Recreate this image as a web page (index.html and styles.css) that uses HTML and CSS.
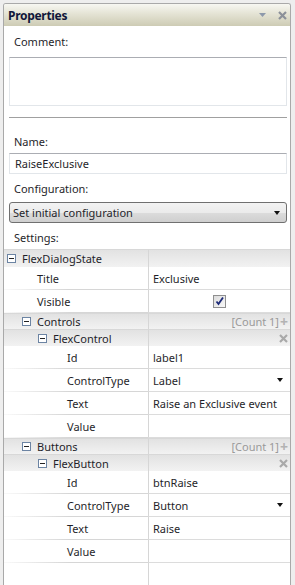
FILE: index.html
```html
<!DOCTYPE html>
<html lang="en">
<head>
  <meta charset="UTF-8">
  <meta name="viewport" content="width=device-width, initial-scale=1.0">
  <title>Properties</title>
  <link rel="stylesheet" href="styles.css">
</head>
<body>
  <div class="panel">
    <div class="titlebar">
      <span class="title">Properties</span>
      <span class="tb-icons">
        <svg width="7" height="4" viewBox="0 0 7 4"><path d="M0 0h7L3.5 4z" fill="#8d99ab"/></svg>
        <svg width="9" height="9" viewBox="0 0 9 9"><path d="M1 1l7 7M8 1L1 8" stroke="#8b9099" stroke-width="2.2"/></svg>
      </span>
    </div>

    <div class="fields">
      <div class="lbl">Comment:</div>
      <div class="memo"></div>
      <div class="sep"></div>
      <div class="lbl">Name:</div>
      <div class="textbox">RaiseExclusive</div>
      <div class="lbl">Configuration:</div>
      <div class="combo">
        <span>Set initial configuration</span>
        <span class="arrow"></span>
      </div>
      <div class="lbl">Settings:</div>
    </div>

    <div class="grid">
      <div class="row head top">
        <div class="key k0"><span class="tg"></span>FlexDialogState</div>
        <div class="val"></div>
      </div>
      <div class="row">
        <div class="key d1">Title</div>
        <div class="val">Exclusive</div>
      </div>
      <div class="row">
        <div class="key d1">Visible</div>
        <div class="val center"><span class="check"><svg width="9" height="9" viewBox="0 0 9 9"><path d="M1.5 4.5l2 2.5L8 0.5" stroke="#1d2a78" stroke-width="1.8" fill="none"/></svg></span></div>
      </div>
      <div class="row head group">
        <div class="key k1"><span class="tg"></span>Controls</div>
        <div class="val right"><span class="count">[Count 1]</span><span class="plus">+</span></div>
      </div>
      <div class="row head item">
        <div class="key k2"><span class="tg"></span>FlexControl</div>
        <div class="val right"><svg width="9" height="9" viewBox="0 0 9 9"><path d="M1 1l7 7M8 1L1 8" stroke="#a9a9a9" stroke-width="2.2"/></svg></div>
      </div>
      <div class="row">
        <div class="key d3">Id</div>
        <div class="val">label1</div>
      </div>
      <div class="row">
        <div class="key d3">ControlType</div>
        <div class="val drop">Label<span class="arrow"></span></div>
      </div>
      <div class="row">
        <div class="key d3">Text</div>
        <div class="val">Raise an Exclusive event</div>
      </div>
      <div class="row">
        <div class="key d3">Value</div>
        <div class="val"></div>
      </div>
      <div class="row head group">
        <div class="key k1"><span class="tg"></span>Buttons</div>
        <div class="val right"><span class="count">[Count 1]</span><span class="plus">+</span></div>
      </div>
      <div class="row head item">
        <div class="key k2"><span class="tg"></span>FlexButton</div>
        <div class="val right"><svg width="9" height="9" viewBox="0 0 9 9"><path d="M1 1l7 7M8 1L1 8" stroke="#a9a9a9" stroke-width="2.2"/></svg></div>
      </div>
      <div class="row">
        <div class="key d3">Id</div>
        <div class="val">btnRaise</div>
      </div>
      <div class="row">
        <div class="key d3">ControlType</div>
        <div class="val drop">Button<span class="arrow"></span></div>
      </div>
      <div class="row">
        <div class="key d3">Text</div>
        <div class="val">Raise</div>
      </div>
      <div class="row">
        <div class="key d3">Value</div>
        <div class="val"></div>
      </div>
      <div class="row filler">
        <div class="key"></div>
        <div class="val"></div>
      </div>
    </div>
  </div>
</body>
</html>
```

FILE: styles.css
```css
html, body {
  height: 100%;
}

body {
  margin: 0;
  padding: 3px 0 0 3px;
  box-sizing: border-box;
  background: #eeeeee;
  overflow: hidden;
  font-family: "Noto Sans", "Open Sans", sans-serif;
  font-size: 11px;
  color: #1f1f2a;
}

.panel {
  width: 288px;
  height: 100%;
  box-sizing: border-box;
  border: 1px solid #a9a9a9;
  border-bottom: none;
  border-radius: 3px 3px 0 0;
  background: #fff;
  display: flex;
  flex-direction: column;
}

/* title bar */
.titlebar {
  height: 22px;
  flex: none;
  display: flex;
  align-items: center;
  justify-content: space-between;
  padding: 0 3px 0 4px;
  background: linear-gradient(#f7f7f2, #e4e3d4 45%, #cdcbb4);
  border-radius: 2px 2px 0 0;
}

.title {
  font-weight: bold;
  font-size: 12px;
  letter-spacing: -0.3px;
  color: #10163a;
}

.tb-icons {
  display: flex;
  align-items: center;
  gap: 12px;
}

/* upper fields */
.fields {
  flex: none;
  padding: 0 3px 0 5px;
}

.lbl {
  padding-left: 5px;
  height: 16px;
  line-height: 16px;
}

.fields .lbl:first-child {
  margin-top: 8px;
}

.memo {
  margin-top: 7px;
  height: 47px;
  border: 1px solid #e2e6ea;
  border-top-color: #abadb3;
}

.sep {
  margin: 11px 0 16px;
  height: 1px;
  background: #a0a0a0;
}

.textbox {
  margin: 3px 0 7px;
  height: 19px;
  line-height: 19px;
  padding-left: 5px;
  border: 1px solid #e2e6ea;
  border-top-color: #abadb3;
}

.combo {
  margin: 5px 0 7px;
  height: 19px;
  padding: 0 6px 0 3px;
  border: 1px solid #707070;
  border-radius: 3px;
  background: linear-gradient(#f3f3f3, #ebebeb 50%, #dcdcdc 51%, #cfcfcf);
  display: flex;
  align-items: center;
  justify-content: space-between;
}

.arrow {
  width: 0;
  height: 0;
  border-left: 3.5px solid transparent;
  border-right: 3.5px solid transparent;
  border-top: 4px solid #111;
}

/* property grid */
.grid {
  flex: 1;
  margin-top: 3px;
  display: flex;
  flex-direction: column;
}

.row {
  display: grid;
  grid-template-columns: 144px 1fr;
  height: 23px;
  flex: none;
}

.row.top { height: 18px; }
.row.group { height: 16px; }
.row.item { height: 17px; }

.row.filler {
  flex: 1;
}

.key, .val {
  display: flex;
  align-items: center;
  border-bottom: 1px solid #dcdcdc;
  white-space: nowrap;
}

.val {
  border-left: 1px solid #d6d6d6;
  padding-left: 4px;
  padding-right: 7px;
}

.row:not(.head) .key {
  border-image: linear-gradient(to right, #fafafa, #d6d6d6 45%) 1;
}

.head .key, .head .val {
  background: linear-gradient(#e2e2e2, #f2f2f2);
  border-top: 1px solid #d8d8d8;
  border-bottom: none;
}

.filler .key, .filler .val {
  border-bottom: none;
}

.tg {
  width: 7px;
  height: 7px;
  border: 1px solid #6c84a3;
  background: #fff;
  margin-right: 6px;
  position: relative;
  flex: none;
}

.tg::after {
  content: "";
  position: absolute;
  left: 1px;
  right: 1px;
  top: 3px;
  height: 1px;
  background: #222;
}

.k0 { padding-left: 3px; }
.k1 { padding-left: 18px; }
.k2 { padding-left: 34px; }
.d1 { padding-left: 33px; }
.d3 { padding-left: 63px; }

.center {
  justify-content: center;
  padding: 0;
}

.right {
  justify-content: flex-end;
  padding-right: 2px;
}

.drop {
  justify-content: space-between;
}

.count {
  color: #9a9a9a;
}

.plus {
  color: #b3b3b3;
  font-weight: bold;
  font-size: 14px;
  margin-left: 1px;
  line-height: 1;
}

.check {
  width: 11px;
  height: 11px;
  border: 1px solid #8f8f8f;
  background: linear-gradient(135deg, #dcdcdc, #f8f8f8);
  display: flex;
  align-items: center;
  justify-content: center;
}
```
